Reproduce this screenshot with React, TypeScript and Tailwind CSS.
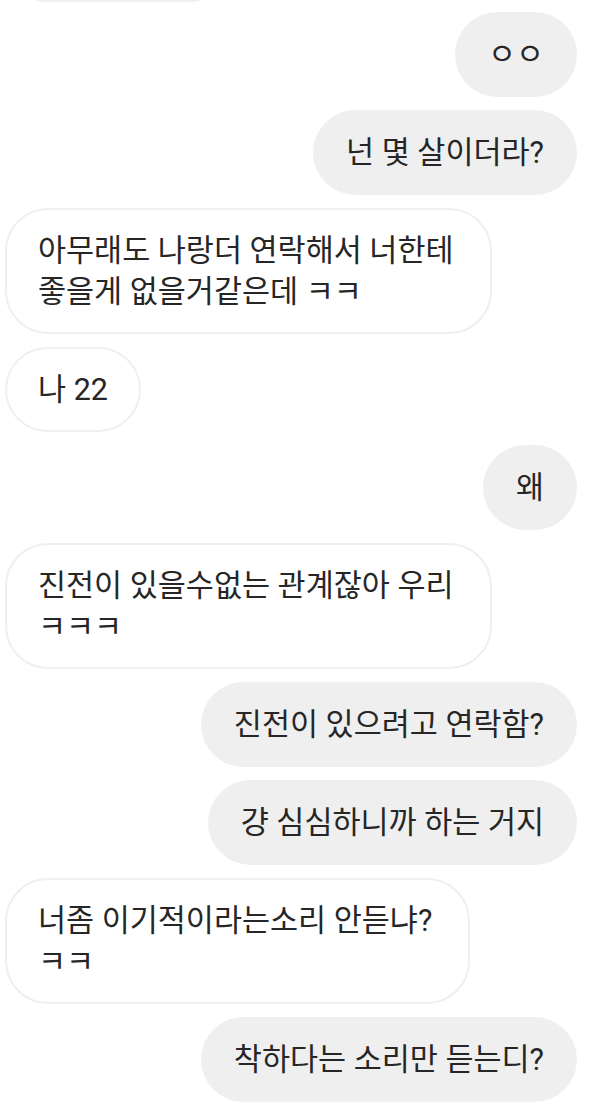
import React from 'react';

type Message = {
  id: number;
  mine: boolean;
  lines: string[];
  width?: string;
};

const messages: Message[] = [
  { id: 1, mine: true, lines: ['ㅇㅇ'] },
  { id: 2, mine: true, lines: ['넌 몇 살이더라?'] },
  { id: 3, mine: false, lines: ['아무래도 나랑더 연락해서 너한테', '좋을게 없을거같은데 ㅋㅋ'], width: 'w-[487px]' },
  { id: 4, mine: false, lines: ['나 22'] },
  { id: 5, mine: true, lines: ['왜'] },
  { id: 6, mine: false, lines: ['진전이 있을수없는 관계잖아 우리', 'ㅋㅋㅋ'], width: 'w-[487px]' },
  { id: 7, mine: true, lines: ['진전이 있으려고 연락함?'] },
  { id: 8, mine: true, lines: ['걍 심심하니까 하는 거지'] },
  { id: 9, mine: false, lines: ['너좀 이기적이라는소리 안듣냐?', 'ㅋㅋ'], width: 'w-[465px]' },
  { id: 10, mine: true, lines: ['착하다는 소리만 듣는디?'] },
];

const Bubble: React.FC<{ msg: Message }> = ({ msg }) => {
  if (msg.mine) {
    return (
      <div className="self-end whitespace-nowrap rounded-[43px] bg-[#efefef] px-[33px] py-[22px] text-[#262626]">
        {msg.lines.map((l, i) => (
          <div key={i}>{l}</div>
        ))}
      </div>
    );
  }
  return (
    <div
      className={`self-start whitespace-nowrap rounded-[43px] border-2 border-[#efefef] bg-white px-[31px] py-[20px] text-[#262626] ${msg.width ?? ''}`}
    >
      {msg.lines.map((l, i) => (
        <div key={i}>{l}</div>
      ))}
    </div>
  );
};

export default function App() {
  return (
    <div
      className="h-[1102px] w-[605px] overflow-hidden bg-white text-[30.5px] leading-[41px]"
      style={{ fontFamily: "Roboto, 'Noto Sans CJK KR', sans-serif" }}
    >
      <div className="flex flex-col gap-[13px] pl-[5px] pr-[28px]">
        {/* bottom edge of the previous message, cut off by the top of the screen */}
        <div className="-mt-[84px] -mb-[3px] h-[86px] w-[228px] self-start rounded-[43px] border-2 border-[#efefef] bg-white" />
        {messages.map((m) => (
          <Bubble key={m.id} msg={m} />
        ))}
      </div>
    </div>
  );
}
